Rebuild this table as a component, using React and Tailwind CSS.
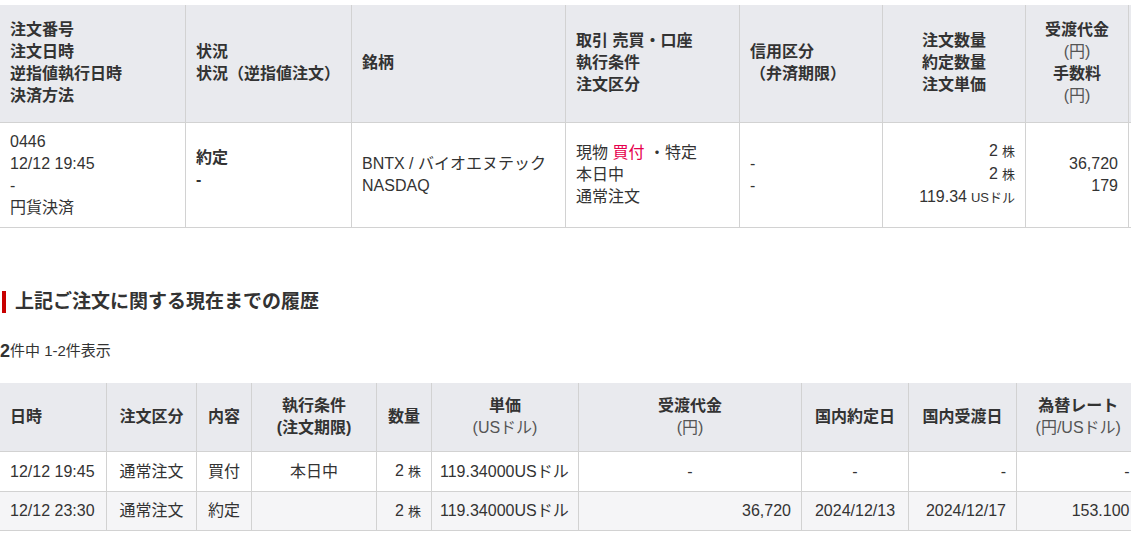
import React from "react";

const font = { fontFamily: '"Liberation Sans", Arial, "Noto Sans CJK JP", sans-serif' };

const th = "bg-[#e9eaee] border-l border-b border-[#d2d2d2] font-bold text-[#333] px-[10px] align-middle whitespace-nowrap";
const td = "border-l border-b border-[#d2d2d2] text-[#333] px-[10px] align-middle whitespace-nowrap";

function Unit({ children }) {
  return <span className="text-[13px] ml-[4px]">{children}</span>;
}

export default function App() {
  return (
    <div className="w-[1131px] h-[533px] overflow-hidden bg-white text-[16px] leading-[22px] text-[#333]" style={font}>

      {/* Order summary */}

      <div className="pt-[5px]">
        <table className="table-fixed border-collapse w-[1240px] -ml-px">
          <colgroup>
            <col className="w-[186px]" />
            <col className="w-[166px]" />
            <col className="w-[214px]" />
            <col className="w-[174px]" />
            <col className="w-[143px]" />
            <col className="w-[143px]" />
            <col className="w-[103px]" />
            <col className="w-[111px]" />
          </colgroup>
          <thead>
            <tr className="h-[117px]">
              <th className={th + " text-left"}>
                注文番号<br />注文日時<br />逆指値執行日時<br />決済方法
              </th>
              <th className={th + " text-left"}>
                状況<br />状況（逆指値注文）
              </th>
              <th className={th + " text-left"}>銘柄</th>
              <th className={th + " text-left"}>
                取引 売買・口座<br />執行条件<br />注文区分
              </th>
              <th className={th + " text-left"}>
                信用区分<br />（弁済期限）
              </th>
              <th className={th + " text-center"}>
                注文数量<br />約定数量<br />注文単価
              </th>
              <th className={th + " text-center"}>
                受渡代金<br />
                <span className="font-normal text-[#555]">(円)</span><br />
                手数料<br />
                <span className="font-normal text-[#555]">(円)</span>
              </th>
              <th className={th}></th>
            </tr>
          </thead>
          <tbody>
            <tr className="h-[105px]">
              <td className={td + " text-left"}>
                0446<br />12/12 19:45<br />-<br />円貨決済
              </td>
              <td className={td + " text-left font-bold"}>
                <div className="mb-[12px]">約定<br />-</div>
              </td>
              <td className={td + " text-left"}>
                BNTX / バイオエヌテック<br />NASDAQ
              </td>
              <td className={td + " text-left"}>
                現物 <span className="text-[#e6004c]">買付</span> ・特定<br />本日中<br />通常注文
              </td>
              <td className={td + " text-left"}>
                -<br />-
              </td>
              <td className={td + " text-right"}>
                2<Unit>株</Unit><br />2<Unit>株</Unit><br />119.34<Unit>USドル</Unit>
              </td>
              <td className={td + " text-right"}>
                36,720<br />179
              </td>
              <td className={td}></td>
            </tr>
          </tbody>
        </table>
      </div>

      {/* History */}

      <div className="mt-[62px] flex items-center h-[24px]">
        <div className="ml-[2px] w-[4px] h-[22px] bg-[#c80000]"></div>
        <h2 className="ml-[9px] text-[19px] font-bold text-[#333]">
          上記ご注文に関する現在までの履歴
        </h2>
      </div>

      <p className="mt-[26px] h-[22px] flex items-end">
        <span className="text-[18px] font-bold leading-[22px]">2</span>
        <span className="text-[15px]">件中 1-2件表示</span>
      </p>

      <div className="mt-[21px]">
        <table className="table-fixed border-collapse w-[1140px] -ml-px">
          <colgroup>
            <col className="w-[107px]" />
            <col className="w-[90px]" />
            <col className="w-[55px]" />
            <col className="w-[125px]" />
            <col className="w-[55px]" />
            <col className="w-[147px]" />
            <col className="w-[223px]" />
            <col className="w-[107px]" />
            <col className="w-[108px]" />
            <col className="w-[123px]" />
          </colgroup>
          <thead>
            <tr className="h-[69px]">
              <th className={th + " text-left"}>日時</th>
              <th className={th + " text-center"}>注文区分</th>
              <th className={th + " text-center"}>内容</th>
              <th className={th + " text-center"}>執行条件<br />(注文期限)</th>
              <th className={th + " text-center"}>数量</th>
              <th className={th + " text-center"}>
                単価<br /><span className="font-normal text-[#555]">(USドル)</span>
              </th>
              <th className={th + " text-center"}>
                受渡代金<br /><span className="font-normal text-[#555]">(円)</span>
              </th>
              <th className={th + " text-center"}>国内約定日</th>
              <th className={th + " text-center"}>国内受渡日</th>
              <th className={th + " text-center"}>
                為替レート<br /><span className="font-normal text-[#555]">(円/USドル)</span>
              </th>
            </tr>
          </thead>
          <tbody>
            <tr className="h-[40px] bg-white">
              <td className={td + " text-left"}>12/12 19:45</td>
              <td className={td + " text-center"}>通常注文</td>
              <td className={td + " text-center"}>買付</td>
              <td className={td + " text-center"}>本日中</td>
              <td className={td + " text-right"}>2<Unit>株</Unit></td>
              <td className={td + " text-left !px-[8px]"}>119.34000USドル</td>
              <td className={td + " text-center"}>-</td>
              <td className={td + " text-center"}>-</td>
              <td className={td + " text-right"}>-</td>
              <td className={td + " text-right"}>-</td>
            </tr>
            <tr className="h-[39px] bg-[#f5f5f7]">
              <td className={td + " text-left"}>12/12 23:30</td>
              <td className={td + " text-center"}>通常注文</td>
              <td className={td + " text-center"}>約定</td>
              <td className={td + " text-center"}></td>
              <td className={td + " text-right"}>2<Unit>株</Unit></td>
              <td className={td + " text-left !px-[8px]"}>119.34000USドル</td>
              <td className={td + " text-right"}>36,720</td>
              <td className={td + " text-center"}>2024/12/13</td>
              <td className={td + " text-right"}>2024/12/17</td>
              <td className={td + " text-right"}>153.100</td>
            </tr>
          </tbody>
        </table>
      </div>

    </div>
  );
}
